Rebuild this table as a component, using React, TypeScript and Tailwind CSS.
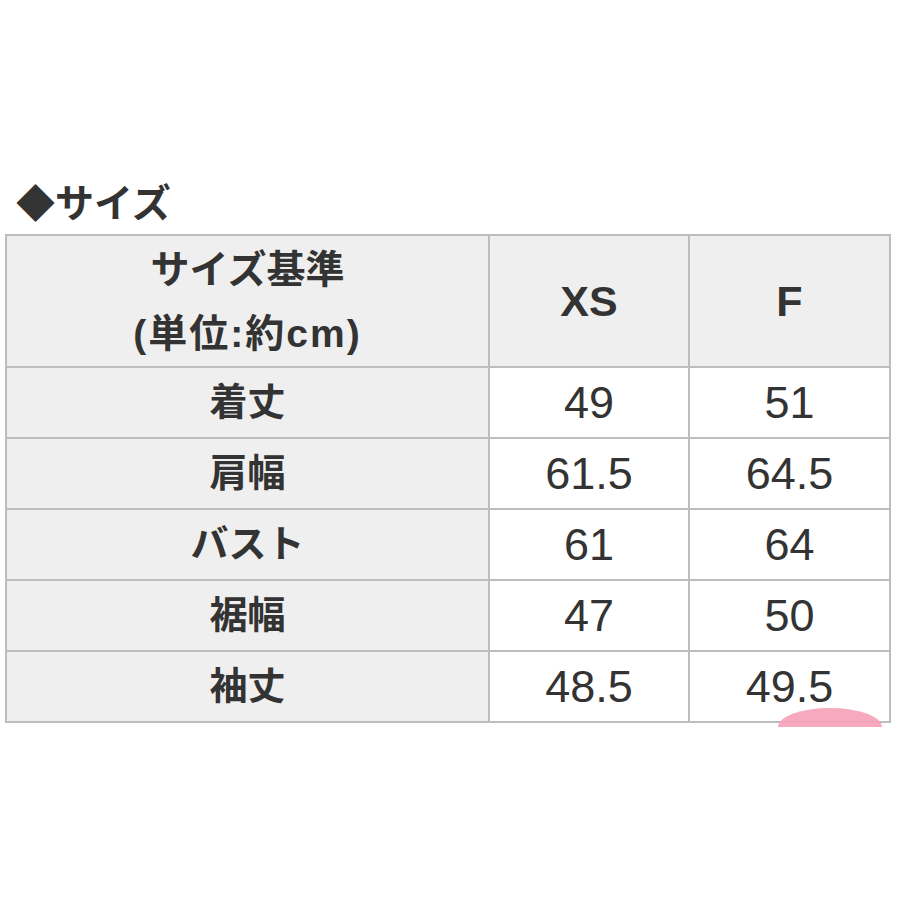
import React from "react";

const rows: [string, string, string][] = [
  ["着丈", "49", "51"],
  ["肩幅", "61.5", "64.5"],
  ["バスト", "61", "64"],
  ["裾幅", "47", "50"],
  ["袖丈", "48.5", "49.5"],
];

export default function App() {
  return (
    <div
      className="w-[900px] h-[900px] bg-white text-[#333333] pt-[185px] px-[5px]"
      style={{ fontFamily: '"Liberation Sans", "Noto Sans CJK JP", sans-serif' }}
    >
      <div className="pl-[11px] h-[38px] leading-[38px] text-[39px] font-bold mb-[11px]">
        ◆サイズ
      </div>
      <div className="relative w-[886px]">
        <div className="grid grid-cols-[481px_198px_199px] grid-rows-[130px_69px_69px_69px_69px_69px] gap-[2px] p-[2px] bg-[#bdbdbd]">
          <div className="bg-[#efefef] flex flex-col items-center justify-center font-bold text-[39px] leading-[64px] pt-[2px]">
            <div>サイズ基準</div>
            <div className="tracking-[2px]">(単位:約cm)</div>
          </div>
          <div className="bg-[#efefef] flex items-center justify-center font-bold text-[43px]">XS</div>
          <div className="bg-[#efefef] flex items-center justify-center font-bold text-[43px]">F</div>
          {rows.map(([label, a, b]) => (
            <React.Fragment key={label}>
              <div className="bg-[#efefef] flex items-center justify-center font-bold text-[38px]">{label}</div>
              <div className="bg-white flex items-center justify-center text-[45px]">{a}</div>
              <div className="bg-white flex items-center justify-center text-[45px]">{b}</div>
            </React.Fragment>
          ))}
        </div>
        <svg
          className="absolute left-[773px] top-[474px]"
          width="104"
          height="20"
          viewBox="0 0 104 20"
        >
          <path d="M0 19 A52 19 0 0 1 104 19 Z" fill="#f5a0b8" fillOpacity="0.9" />
        </svg>
      </div>
    </div>
  );
}
